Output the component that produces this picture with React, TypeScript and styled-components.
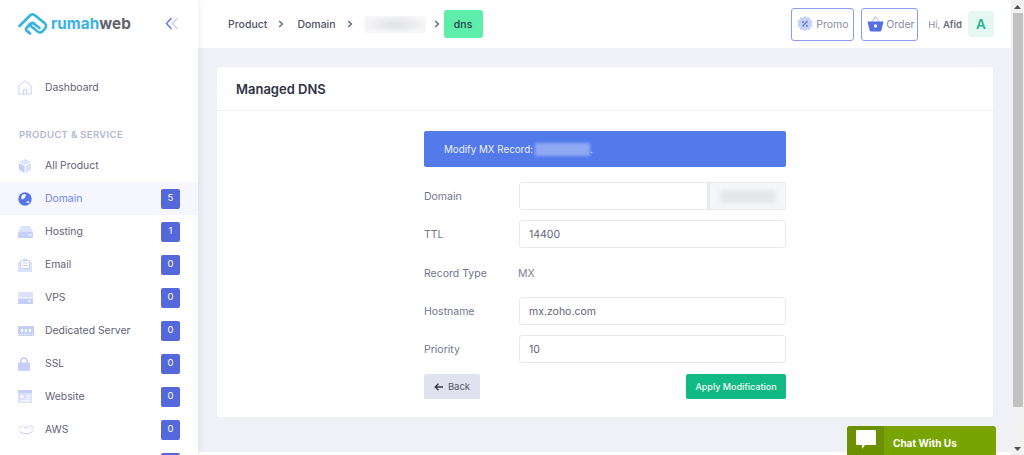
import React from 'react';
import styled, { createGlobalStyle } from 'styled-components';

const GlobalStyle = createGlobalStyle`
  html, body {
    margin: 0;
    height: 455px;
    overflow: hidden;
    background: #ffffff;
    font-family: "Inter", "Liberation Sans", sans-serif;
  }
  * {
    box-sizing: border-box;
  }
`;

const Page = styled.div`
  display: flex;
  width: 1024px;
  height: 455px;
  overflow: hidden;
`;

const Sidebar = styled.aside`
  width: 198px;
  height: 455px;
  flex-shrink: 0;
  overflow: hidden;
  background: #ffffff;
  box-shadow: 1px 0 6px rgba(60, 70, 120, 0.09);
  position: relative;
  z-index: 2;
`;

const Brand = styled.div`
  height: 48px;
  display: flex;
  align-items: center;
  justify-content: space-between;
  padding: 0 19px 2px 18px;
`;

const LogoWrap = styled.div`
  display: flex;
  align-items: center;
  gap: 3px;
`;

const LogoText = styled.div`
  font-family: "Inter", sans-serif;
  font-weight: 700;
  font-size: 15.2px;
  letter-spacing: 0.1px;
  color: #35b4e4;
  span {
    color: #60626e;
  }
`;

const DashRow = styled.div`
  margin-top: 23px;
`;

const SectionTitle = styled.div`
  margin: 24px 0 7px 19px;
  height: 14px;
  line-height: 14px;
  font-size: 9.5px;
  font-weight: 600;
  letter-spacing: 0.35px;
  color: #b1b7d1;
`;

const NavRow = styled.div<{ $active?: boolean }>`
  height: 33px;
  display: flex;
  align-items: center;
  padding: 0 18px 0 18px;
  background: ${({ $active }) => ($active ? '#f5f6fe' : 'transparent')};
`;

const NavIcon = styled.div`
  width: 27px;
  height: 20px;
  flex-shrink: 0;
  display: flex;
  align-items: center;
`;

const NavLabel = styled.div<{ $active?: boolean }>`
  flex: 1;
  font-size: 10.4px;
  font-weight: 400;
  color: ${({ $active }) => ($active ? '#6f86ee' : '#5f6278')};
`;

const Badge = styled.div`
  width: 19px;
  height: 20px;
  border-radius: 2px;
  background: #5468dc;
  color: #ffffff;
  font-size: 9.5px;
  line-height: 18px;
  text-align: center;
`;

const Main = styled.div`
  flex: 1;
  min-width: 0;
  height: 455px;
  display: flex;
  flex-direction: column;
  background: #f0f1f6;
`;

const Topbar = styled.header`
  height: 48px;
  flex-shrink: 0;
  background: #ffffff;
  display: flex;
  align-items: center;
  padding: 0 17px 0 30px;
`;

const Crumb = styled.div`
  font-size: 10.5px;
  font-weight: 500;
  color: #50536a;
`;

const CrumbArrow = styled.div<{ $gap: number }>`
  width: 8px;
  margin: 0 ${({ $gap }) => $gap}px 0 11px;
  display: flex;
`;

const BlurredCrumb = styled.div`
  width: 62px;
  height: 17px;
  margin-right: 8px;
  border-radius: 2px;
  background: radial-gradient(ellipse at center, #e3e4e8 10%, #f5f5f7 70%, #fafafa 100%);
`;

const ActiveCrumb = styled.div`
  width: 39px;
  height: 28px;
  margin-left: 4px;
  border-radius: 3px;
  background: #5eedaa;
  color: #22414a;
  font-size: 10.5px;
  font-weight: 500;
  display: flex;
  align-items: center;
  justify-content: center;
`;

const TopActions = styled.div`
  margin-left: auto;
  display: flex;
  align-items: center;
`;

const OutlineButton = styled.div<{ $width: number; $gap: number }>`
  width: ${({ $width }) => $width}px;
  height: 33px;
  margin-right: 7px;
  border: 1px solid #8c9cf0;
  border-radius: 3px;
  display: flex;
  align-items: center;
  padding-left: 5px;
  gap: ${({ $gap }) => $gap}px;
  font-size: 10.5px;
  color: #8a8ea3;
`;

const Greeting = styled.div`
  margin-left: 3px;
  font-size: 9.5px;
  color: #8d90a6;
  b {
    font-weight: 600;
    color: #66697f;
  }
`;

const Avatar = styled.div`
  width: 26px;
  height: 26px;
  margin-left: 6px;
  border-radius: 3px;
  background: #e6f7f2;
  color: #1cbb8c;
  font-size: 13.5px;
  font-weight: 600;
  display: flex;
  align-items: center;
  justify-content: center;
`;

const Content = styled.main`
  flex: 1;
  padding: 19px 18px 0 19px;
`;

const Card = styled.section`
  height: 350px;
  background: #ffffff;
  border-radius: 3px;
`;

const CardHeader = styled.div`
  height: 44px;
  padding: 0 19px;
  display: flex;
  align-items: center;
  border-bottom: 1px solid #eff0f5;
  font-size: 13px;
  font-weight: 600;
  color: #2f3245;
`;

const Form = styled.div`
  width: 362px;
  margin: 20px 0 0 207px;
`;

const Alert = styled.div`
  height: 36px;
  padding: 0 20px;
  margin-bottom: 15px;
  background: #5379ea;
  border-radius: 2px;
  color: #eaeefc;
  font-size: 9.8px;
  display: flex;
  align-items: center;
`;

const AlertBlur = styled.span`
  width: 55px;
  height: 13px;
  margin-left: 2px;
  background: #8ea8f2;
  filter: blur(1.5px);
`;

const FieldRow = styled.div<{ $mt?: number; $mb: number }>`
  display: grid;
  grid-template-columns: 95px 1fr;
  align-items: center;
  margin-top: ${({ $mt }) => $mt ?? 0}px;
  margin-bottom: ${({ $mb }) => $mb}px;
`;

const FieldLabel = styled.div`
  font-size: 10.5px;
  color: #71768f;
`;

const Input = styled.div`
  height: 28px;
  padding: 0 9px;
  border: 1px solid #e9eaf1;
  border-radius: 3px;
  background: #ffffff;
  font-size: 10.5px;
  color: #5f6275;
  display: flex;
  align-items: center;
`;

const InputGroup = styled.div`
  display: grid;
  grid-template-columns: 1fr 78px;
  height: 28px;
`;

const GroupInput = styled(Input)`
  border-radius: 3px 0 0 3px;
`;

const GroupAddon = styled.div`
  border: 1px solid #e9eaf1;
  border-left-width: 2px;
  background: #f5f6f9;
  display: flex;
  align-items: center;
  justify-content: center;
`;

const AddonBlur = styled.div`
  width: 56px;
  height: 13px;
  background: #e6e7ea;
  filter: blur(2px);
`;

const StaticValue = styled.div`
  font-size: 10.5px;
  color: #7c8094;
  margin-left: -1px;
`;

const Actions = styled.div`
  display: flex;
  justify-content: space-between;
`;

const BackButton = styled.div`
  width: 56px;
  height: 25px;
  border-radius: 2px;
  background: #e0e2ef;
  color: #55586a;
  font-size: 9.5px;
  display: flex;
  align-items: center;
  justify-content: center;
  gap: 5px;
`;

const ApplyButton = styled.div`
  width: 100px;
  height: 25px;
  border-radius: 2px;
  background: #11ba82;
  color: #f2fbf8;
  font-size: 9px;
  font-weight: 500;
  display: flex;
  align-items: center;
  justify-content: center;
`;

const Footer = styled.div`
  height: 3px;
  background: #ffffff;
  flex-shrink: 0;
`;

const ChatWidget = styled.div`
  position: absolute;
  left: 847px;
  top: 426px;
  width: 149px;
  height: 29px;
  display: flex;
  align-items: stretch;
  background: #78a300;
  border-radius: 3px 3px 0 0;
  overflow: hidden;
  z-index: 3;
`;

const ChatIconBox = styled.div`
  width: 37px;
  background: #6b9100;
  display: flex;
  justify-content: center;
  padding-top: 4px;
`;

const ChatText = styled.div`
  flex: 1;
  padding: 11px 0 0 9px;
  color: #ffffff;
  font-size: 10px;
  font-weight: 700;
`;

const Scrollbar = styled.div`
  width: 13px;
  height: 455px;
  flex-shrink: 0;
  background: #f1f1f1;
  display: flex;
  flex-direction: column;
  align-items: center;
`;

const ScrollArrow = styled.div`
  height: 13px;
  width: 100%;
  display: flex;
  align-items: center;
  justify-content: center;
`;

const ScrollThumb = styled.div`
  width: 10px;
  height: 394px;
  background: #c1c1c1;
`;

const ScrollSpacer = styled.div`
  flex: 1;
`;

// all nav icons share the pale periwinkle fill
const pale = '#c5cff8';
const paleLight = '#dbe2fb';

const LogoMark = () => (
  <svg width="30" height="23" viewBox="0 0 30 23" fill="none" stroke="#35b4e4" strokeWidth="2.6" strokeLinecap="round">
    <path d="M1.5 14 L12.5 3 Q14.5 1.5 16.5 3 L27 11.5 Q29 14 27 16.5 L24.5 19.5 Q22 21.5 19.5 19.5 L11 12.5" />
    <path d="M8 16.5 L12.5 12 Q14.5 10 16.5 12 L21.5 16" />
    <path d="M8 18 L12 21.5" />
  </svg>
);

const Collapse = () => (
  <svg width="14" height="13" viewBox="0 0 14 13" fill="none" strokeWidth="1.4">
    <path d="M6.5 1 L1.5 6.5 L6.5 12" stroke="#5c78ea" />
    <path d="M12.5 1 L7.5 6.5 L12.5 12" stroke="#c8d2f8" />
  </svg>
);

const HomeIcon = () => (
  <svg width="14" height="15" viewBox="0 0 14 15" fill="none" stroke={pale} strokeWidth="1">
    <path d="M.8 5.8 L7 .8 L13.2 5.8 V14 H.8 Z" />
    <path d="M5.3 14 V9.8 H8.7 V14" />
  </svg>
);

const BoxIcon = () => (
  <svg width="14" height="14" viewBox="0 0 14 14">
    <path d="M7 0 L13 3 L7 6 L1 3 Z" fill={paleLight} />
    <path d="M1 4 L6.5 7 V14 L1 11 Z" fill={pale} />
    <path d="M13 4 L7.5 7 V14 L13 11 Z" fill={paleLight} />
  </svg>
);

const GlobeIcon = () => (
  <svg width="14" height="14" viewBox="0 0 14 14">
    <circle cx="7" cy="7" r="6.7" fill="#5874e8" />
    <path d="M4 3 Q7 1 8 3.5 Q7 7 4 7.5 Q2.5 6 4 3 Z M8 10 Q10 8.5 12 10 Q10 12 8 10 Z" fill="#f0f3fe" />
  </svg>
);

const HostingIcon = () => (
  <svg width="15" height="12" viewBox="0 0 15 12">
    <path d="M3 0 H12 L15 6 H0 Z" fill={paleLight} />
    <rect y="6" width="15" height="6" rx="1" fill={pale} />
    <circle cx="11" cy="9" r=".8" fill="#fff" />
    <circle cx="13" cy="9" r=".8" fill="#fff" />
  </svg>
);

const EmailIcon = () => (
  <svg width="14" height="14" viewBox="0 0 14 14">
    <path d="M0 5 L7 0 L14 5 V14 H0 Z" fill={paleLight} />
    <rect x="2.5" y="2.5" width="9" height="8" rx="1.5" fill="#fff" stroke={pale} />
    <path d="M4.5 5 H9.5 M4.5 7.5 H9.5" stroke={pale} />
  </svg>
);

const VpsIcon = () => (
  <svg width="15" height="12" viewBox="0 0 15 12">
    <rect width="15" height="5.5" fill={paleLight} />
    <rect y="6.5" width="15" height="5.5" fill={pale} />
    <rect x="10" y="8.5" width="3" height="1" fill="#fff" />
  </svg>
);

const ServerIcon = () => (
  <svg width="16" height="10" viewBox="0 0 16 10">
    <rect width="16" height="10" fill={pale} />
    <path d="M3 3 H5 V6 H3 Z M7 3 H9 V6 H7 Z M11 3 H13 V6 H11 Z" fill="#fff" />
    <path d="M0 8.5 H16" stroke="#fff" strokeDasharray="1 1" />
  </svg>
);

const LockIcon = () => (
  <svg width="12" height="14" viewBox="0 0 12 14">
    <path d="M3 6 V4 A3 3 0 0 1 9 4 V6" fill="none" stroke={pale} strokeWidth="1.6" />
    <rect y="5.5" width="12" height="8.5" rx="1.5" fill={pale} />
  </svg>
);

const WebIcon = () => (
  <svg width="14" height="13" viewBox="0 0 14 13">
    <rect width="14" height="13" fill={paleLight} />
    <rect y="0" width="14" height="3" fill={pale} />
    <rect x="2" y="5" width="4" height="3.5" fill="#fff" stroke={pale} strokeWidth=".6" />
    <path d="M8 5.5 H12 M8 8 H12 M2 10.8 H12" stroke="#fff" />
  </svg>
);

const AwsIcon = () => (
  <svg width="16" height="11" viewBox="0 0 16 11" fill="none">
    <path d="M1 7.5 Q8 12 15 7.5" stroke={pale} strokeWidth="1" />
    <path d="M1 1.5 L2.5 5 L4 1.5 M5.5 1 L6.5 5 L8 2 L9.5 5 L10.5 1 M15 1.5 H12.5 V3 H15 V5 H12" stroke={paleLight} strokeWidth=".9" />
  </svg>
);

const Chevron = () => (
  <svg width="6" height="8" viewBox="0 0 6 8" fill="none" stroke="#5b6c95" strokeWidth="1.5">
    <path d="M1.2 1 L4.4 4 L1.2 7" />
  </svg>
);

const PromoIcon = () => (
  <svg width="16" height="16" viewBox="0 0 16 16">
    <path
      d="M8 0 L10 1.5 L12.5 1.2 L13.4 3.5 L15.5 5 L14.8 7.5 L15.5 10 L13.5 11.5 L12.5 14 L10 13.8 L8 15.5 L6 13.8 L3.5 14 L2.5 11.5 L.5 10 L1.2 7.5 L.5 5 L2.6 3.5 L3.5 1.2 L6 1.5 Z"
      fill="#c9d3f9"
    />
    <path d="M5.5 10.5 L10.5 5" stroke="#5874e8" strokeWidth="1.2" />
    <circle cx="6" cy="6" r="1" fill="#5874e8" />
    <circle cx="10" cy="10" r="1" fill="#5874e8" />
  </svg>
);

const BasketIcon = () => (
  <svg width="17" height="16" viewBox="0 0 17 16">
    <path d="M4.5 6 L8.5 .8 L12.5 6" fill="none" stroke="#b9c5f6" strokeWidth="1.1" />
    <path d="M.5 5.5 H16.5 L14.5 14 Q14.2 15.5 12.5 15.5 H4.5 Q2.8 15.5 2.5 14 Z" fill="#5470e4" />
    <circle cx="8.5" cy="10" r="1.7" fill="#eef1fd" />
  </svg>
);

const BackArrow = () => (
  <svg width="9" height="8" viewBox="0 0 9 8" fill="none" stroke="#353849" strokeWidth="1.3">
    <path d="M4.5 .8 L1.2 4 L4.5 7.2 M1.2 4 H9" />
  </svg>
);

const ChatBubble = () => (
  <svg width="20" height="20" viewBox="0 0 20 20">
    <path d="M1 0 H19 Q20 0 20 1 V14 Q20 15 19 15 H9 L6 19 V15 H1 Q0 15 0 14 V1 Q0 0 1 0 Z" fill="#ffffff" />
  </svg>
);

const navItems: { label: string; count?: number; icon: React.ReactNode; active?: boolean; badge?: boolean }[] = [
  { label: 'All Product', icon: <BoxIcon /> },
  { label: 'Domain', count: 5, icon: <GlobeIcon />, active: true, badge: true },
  { label: 'Hosting', count: 1, icon: <HostingIcon />, badge: true },
  { label: 'Email', count: 0, icon: <EmailIcon />, badge: true },
  { label: 'VPS', count: 0, icon: <VpsIcon />, badge: true },
  { label: 'Dedicated Server', count: 0, icon: <ServerIcon />, badge: true },
  { label: 'SSL', count: 0, icon: <LockIcon />, badge: true },
  { label: 'Website', count: 0, icon: <WebIcon />, badge: true },
  { label: 'AWS', count: 0, icon: <AwsIcon />, badge: true },
  // next row is scrolled past the fold, only the top of its badge shows
  { label: '', icon: null, badge: true },
];

export default function App() {
  return (
    <>
      <GlobalStyle />
      <Page>
        <Sidebar>
          <Brand>
            <LogoWrap>
              <LogoMark />
              <LogoText>
                rumah<span>web</span>
              </LogoText>
            </LogoWrap>
            <Collapse />
          </Brand>
          <DashRow>
            <NavRow>
              <NavIcon>
                <HomeIcon />
              </NavIcon>
              <NavLabel>Dashboard</NavLabel>
            </NavRow>
          </DashRow>
          <SectionTitle>PRODUCT &amp; SERVICE</SectionTitle>
          {navItems.map((item, i) => (
            <NavRow key={i} $active={item.active}>
              <NavIcon>{item.icon}</NavIcon>
              <NavLabel $active={item.active}>{item.label}</NavLabel>
              {item.badge && <Badge>{item.count}</Badge>}
            </NavRow>
          ))}
        </Sidebar>
        <Main>
          <Topbar>
            <Crumb>Product</Crumb>
            <CrumbArrow $gap={11}>
              <Chevron />
            </CrumbArrow>
            <Crumb>Domain</Crumb>
            <CrumbArrow $gap={9}>
              <Chevron />
            </CrumbArrow>
            <BlurredCrumb />
            <Chevron />
            <ActiveCrumb>dns</ActiveCrumb>
            <TopActions>
              <OutlineButton $width={63} $gap={3}>
                <PromoIcon />
                Promo
              </OutlineButton>
              <OutlineButton $width={57} $gap={2}>
                <BasketIcon />
                Order
              </OutlineButton>
              <Greeting>
                Hi, <b>Afid</b>
              </Greeting>
              <Avatar>A</Avatar>
            </TopActions>
          </Topbar>
          <Content>
            <Card>
              <CardHeader>Managed DNS</CardHeader>
              <Form>
                <Alert>
                  Modify MX Record:
                  <AlertBlur />.
                </Alert>
                <FieldRow $mb={10}>
                  <FieldLabel>Domain</FieldLabel>
                  <InputGroup>
                    <GroupInput />
                    <GroupAddon>
                      <AddonBlur />
                    </GroupAddon>
                  </InputGroup>
                </FieldRow>
                <FieldRow $mb={0}>
                  <FieldLabel>TTL</FieldLabel>
                  <Input>14400</Input>
                </FieldRow>
                <FieldRow $mt={19} $mb={17}>
                  <FieldLabel>Record Type</FieldLabel>
                  <StaticValue>MX</StaticValue>
                </FieldRow>
                <FieldRow $mb={10}>
                  <FieldLabel>Hostname</FieldLabel>
                  <Input>mx.zoho.com</Input>
                </FieldRow>
                <FieldRow $mb={11}>
                  <FieldLabel>Priority</FieldLabel>
                  <Input>10</Input>
                </FieldRow>
                <Actions>
                  <BackButton>
                    <BackArrow />
                    Back
                  </BackButton>
                  <ApplyButton>Apply Modification</ApplyButton>
                </Actions>
              </Form>
            </Card>
          </Content>
          <Footer />
        </Main>
        <Scrollbar>
          <ScrollArrow>
            <svg width="7" height="4" viewBox="0 0 7 4">
              <path d="M3.5 0 L7 4 H0 Z" fill="#505050" />
            </svg>
          </ScrollArrow>
          <ScrollThumb />
          <ScrollSpacer />
          <ScrollArrow>
            <svg width="7" height="4" viewBox="0 0 7 4">
              <path d="M3.5 4 L7 0 H0 Z" fill="#505050" />
            </svg>
          </ScrollArrow>
        </Scrollbar>
        <ChatWidget>
          <ChatIconBox>
            <ChatBubble />
          </ChatIconBox>
          <ChatText>Chat With Us</ChatText>
        </ChatWidget>
      </Page>
    </>
  );
}
